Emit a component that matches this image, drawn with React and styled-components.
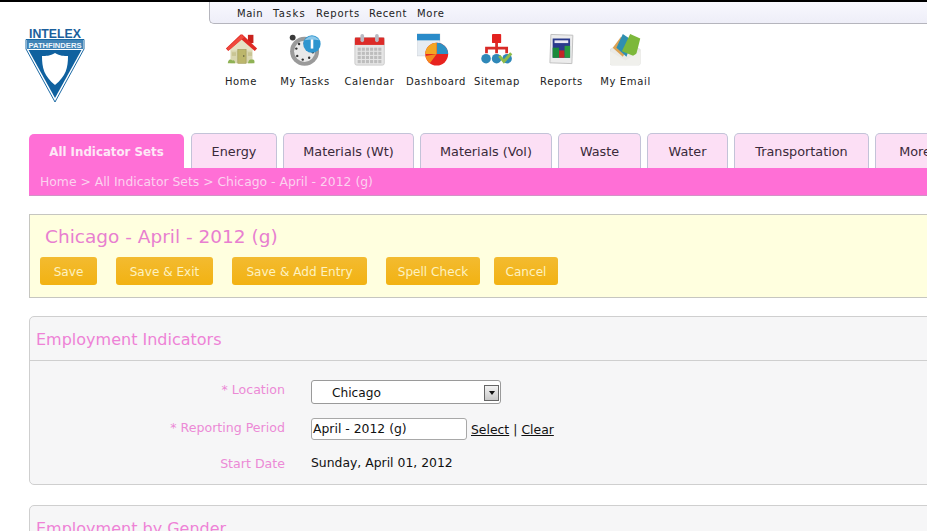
import React from 'react';
import styled, { createGlobalStyle } from 'styled-components';

const Global = createGlobalStyle`
  html, body { margin: 0; padding: 0; background: #fff; overflow: hidden; }
  body { font-family: "DejaVu Sans", Verdana, sans-serif; width: 927px; height: 531px; }
`;
const Page = styled.div`
  width: 927px; height: 531px; overflow: hidden; display: flex; flex-direction: column;
  border-top: 2px solid #000; box-sizing: border-box;
`;
const Header = styled.header`
  display: flex; height: 131px; flex: none;
`;
const LogoBox = styled.div`
  width: 209px; flex: none; padding: 26px 0 0 25px; box-sizing: border-box;
`;
const NavCol = styled.div`
  flex: 1; display: flex; flex-direction: column;
`;
const TopMenu = styled.nav`
  height: 22px; flex: none; box-sizing: border-box; background: linear-gradient(#f8f8fe, #eeeef8);
  border-left: 1px solid #b5b5bd; border-bottom: 1px solid #b5b5bd; border-bottom-left-radius: 5px;
  display: flex; gap: 10px; padding: 6px 0 0 27px; font-size: 10px; line-height: 12px; color: #222; letter-spacing: .55px;
`;
const MenuItem = styled.span`
  width: ${p => p.$w}px; flex: none; white-space: nowrap; letter-spacing: ${p => p.$ls}px;
`;
const IconRow = styled.div`
  display: flex; padding-top: 9px;
`;
const IconItem = styled.a`
  width: ${p => p.$w}px; flex: none; display: flex; flex-direction: column; align-items: center;
  font-size: 10px; color: #222; white-space: nowrap; letter-spacing: .65px;
  span { margin-top: 9px; line-height: 13px; }
  svg { display: block; height: 33px; width: auto; margin-right: ${p => p.$shift || 0}px; }
`;
const TabBar = styled.div`
  display: flex; align-items: flex-end; height: 35px; padding-left: 29px; gap: 6px; flex: none; overflow: hidden;
`;
const Tab = styled.div`
  flex: none; width: ${p => p.$w}px; height: ${p => p.$active ? 34 : 35}px; box-sizing: border-box;
  text-align: center; font-size: ${p => p.$active ? 11.8 : 12.8}px; line-height: 36px; white-space: nowrap;
  font-weight: ${p => p.$active ? 700 : 400};
  border-radius: 5px 5px 0 0;
  color: ${p => p.$active ? '#fde8f6' : '#3a2a3a'};
  background: ${p => p.$active ? '#ff6fd6' : '#fcdff5'};
  border: ${p => p.$active ? 'none' : '1px solid #c3c3d8'};
  border-bottom: none;
  margin-right: ${p => p.$active ? 1 : 0}px;
`;
const Crumbs = styled.div`
  margin-left: 29px; height: 28px; flex: none; box-sizing: border-box; background: #ff6fd6;
  border-bottom: 1px solid #d392c6; padding-left: 11px; line-height: 28px; font-size: 12.37px; color: #fbd3ef;
`;
const TitleBox = styled.section`
  margin: 18px 0 0 29px; width: 920px; height: 84px; flex: none; box-sizing: border-box;
  background: #ffffdf; border: 1px solid #c6c6c0; padding: 10px 0 0 10px;
`;
const Title = styled.h1`
  margin: 0 0 8px 5px; font-weight: 400; font-size: 18.5px; line-height: 24px; color: #e87fd0;
`;
const Buttons = styled.div` display: flex; `;
const Btn = styled.button`
  width: ${p => p.$w}px; margin-right: ${p => p.$mr}px; height: 28px; padding: 2px 0 0; border: none; border-radius: 3px;
  background: linear-gradient(#f3bb30, #f2b212);
  color: #fdf2c0; font-family: inherit; font-size: 12.1px; text-align: center;
`;
const Panel = styled.section`
  margin: ${p => p.$mt}px 0 0 29px; width: 920px; flex: none; box-sizing: border-box;
  background: #f6f6f7; border: 1px solid #cfcfcf; border-radius: 5px;
`;
const PanelHead = styled.h2`
  margin: 0; height: 44px; box-sizing: border-box; padding: 1px 0 0 6px; line-height: 44px;
  font-weight: 400; font-size: 16px; color: #ee82d6;
  border-bottom: ${p => p.$noline ? 'none' : '1px solid #cfcfcf'};
`;
const Form = styled.div`
  display: grid; grid-template-columns: 255px 1fr; column-gap: 26px; padding-top: 19px; height: 123px; box-sizing: border-box;
  grid-template-rows: 25px 24px 24px;
`;
const Label = styled.label`
  text-align: right; font-size: 12.6px; color: #ec8ad6; line-height: 18px; margin-top: ${p => p.$t || 0}px;
`;
const Select = styled.div`
  width: 190px; height: 24px; box-sizing: border-box; background: #fff; border: 1px solid #9a9a9a; border-radius: 3px;
  display: flex; align-items: center; justify-content: space-between; padding: 1px 1px 0 20px; font-size: 12.2px; color: #111;
`;
const Arrow = styled.span`
  width: 15px; height: 16px; box-sizing: border-box; border: 1px solid #666; background: linear-gradient(#f2f2f2, #c9c9c9);
  display: flex; align-items: center; justify-content: center;
  &::after { content: ''; border-left: 3.5px solid transparent; border-right: 3.5px solid transparent; border-top: 4px solid #111; }
`;
const FieldRow = styled.div`
  display: flex; align-items: center; gap: 4px; font-size: 12.4px; color: #111; margin-top: ${p => p.$t || 0}px; height: 22px;
`;
const Input = styled.div`
  width: 156px; height: 22px; box-sizing: border-box; background: #fff; border: 1px solid #a8a8a8; border-radius: 3px;
  padding-left: 1px; line-height: 20px; white-space: nowrap;
`;
const Lnk = styled.a` color: #111; text-decoration: underline; `;
const Value = styled.div` font-size: 12.4px; color: #111; line-height: 18px; margin-top: ${p => p.$t || 0}px; `;

const Logo = () => (
  <svg width="60" height="76" viewBox="0 0 60 76">
    <text x="30" y="9.6" textAnchor="middle" fontFamily="'Liberation Sans', sans-serif" fontWeight="700" fontSize="12" fill="#1b5f9c" textLength="52" lengthAdjust="spacingAndGlyphs">INTELEX</text>
    <path d="M1 11.5 H59 V21 L30 74 L1 21 Z" fill="#fff" stroke="#1b6aa5" strokeWidth="1"/>
    <path d="M3.5 22 H56.5 L30 70 Z" fill="#0f619f"/>
    <rect x="2" y="12" width="56" height="9" fill="#3f83b6"/>
    <text x="30" y="19.6" textAnchor="middle" fontFamily="'Liberation Sans', sans-serif" fontWeight="700" fontSize="8" fill="#eef5fa" textLength="53" lengthAdjust="spacingAndGlyphs">PATHFINDERS</text>
    <path d="M30 25 C35 28 39 28 43 28 C43 40 41 48 30 57 C19 48 17 40 17 28 C21 28 25 28 30 25 Z" fill="#fff"/>
  </svg>
);
const HomeIcon = () => (
  <svg viewBox="0 0 36 36">
    <rect x="6" y="16" width="24" height="17" fill="#d9d6b0"/>
    <path d="M6 16 L18 5 L30 16 V19 H6 Z" fill="#e5e2c4"/>
    <rect x="14" y="18" width="9" height="15" fill="#bcb66c" stroke="#98934f" strokeWidth=".6"/>
    <circle cx="20.5" cy="25" r=".8" fill="#443"/>
    <rect x="7.5" y="21" width="4.5" height="4" fill="#c9c594"/><rect x="25" y="21" width="4.5" height="4" fill="#c9c594"/>
    <path d="M3 33 q1-6 5-3 q3-1 3 3 Z M25 33 q1-5 4-4 q4-1 3 4 Z" fill="#8fb255"/>
    <rect x="25" y="2" width="6" height="9" fill="#c9211c"/>
    <path d="M1 17 L17 1.5 h2 L35 17 L32.5 19.5 L18 7 L3.5 19.5 Z" fill="#e02a24"/>
    <path d="M2 17 L18 2 L21 4.5 L4 19 Z" fill="#f04a3e"/>
  </svg>
);
const TasksIcon = () => (
  <svg viewBox="0 0 36 36">
    <circle cx="4" cy="5" r="3.2" fill="#3a3a3a"/>
    <circle cx="17" cy="20" r="15.8" fill="#9a9a9a"/>
    <circle cx="17" cy="20" r="11.5" fill="#e9e9e9"/>
    {[[17,11],[24,14],[26,21],[22,27],[15,29],[9,25],[8,17],[11,12]].map(([x,y],i)=><circle key={i} cx={x} cy={y} r="1.3" fill={i===0?'#c33':'#333'}/>)}
    <circle cx="25" cy="12" r="9.5" fill="#2f96cf"/>
    <path d="M17 8 a9.5 9.5 0 0 1 16 0 q-8 -2 -16 0 Z" fill="#8cc8ea"/>
    <rect x="23.7" y="7" width="2.8" height="10" fill="#fff"/>
  </svg>
);
const CalendarIcon = () => (
  <svg viewBox="0 0 34 36">
    <rect x="1" y="5" width="32" height="30" rx="2" fill="#e6e6e6" stroke="#c8c8c8"/>
    <rect x="1" y="5" width="32" height="8" fill="#dc2b28"/>
    <rect x="7" y="1" width="4" height="9" rx="2" fill="#b9b9c2"/>
    <rect x="23" y="1" width="4" height="9" rx="2" fill="#b9b9c2"/>
    {[0,1,2,3].flatMap(r=>[0,1,2,3,4,5].map(c=><rect key={r+'-'+c} x={4+c*4.5} y={16+r*4.5} width="3.4" height="3.4" fill="#bdbdbd"/>))}
  </svg>
);
const DashIcon = () => (
  <svg viewBox="0 0 34 36">
    <rect x="0" y="1" width="25" height="24" fill="#e6ecf2" stroke="#c7ccd2" strokeWidth=".6"/>
    <rect x="0" y="1" width="25" height="7" fill="#2a8bc9"/>
    <circle cx="21.5" cy="23" r="12.5" fill="#e8231f"/>
    <path d="M21.5 23 L21.5 10.5 A12.5 12.5 0 0 1 34 23 Z" fill="#2d91c4"/>
    <path d="M21.5 23 L9 23 A12.5 12.5 0 0 1 21.5 10.5 Z" fill="#f5a623"/>
    <path d="M21.5 23 L9.2 25 A12.5 12.5 0 0 0 14 33 Z" fill="#f58a1f"/>
  </svg>
);
const SitemapIcon = () => (
  <svg viewBox="0 0 34 36">
    <rect x="12" y="1" width="10" height="10" rx="1" fill="#e3211f"/>
    <path d="M15.5 11 h3 v4 h11 v7 h-3 v-4 h-8 v4 h-3 v-4 h-8 v4 h-3 v-7 h11 Z" fill="#d82a27"/>
    <circle cx="5.5" cy="28" r="5.2" fill="#2f88b8"/><circle cx="17" cy="28" r="5.2" fill="#2f88b8"/><circle cx="28.5" cy="28" r="5.2" fill="#2f88b8"/>
    <path d="M20 25 l5 6 l8-9" fill="none" stroke="#8fbb4a" strokeWidth="3.2"/>
  </svg>
);
const ReportsIcon = () => (
  <svg viewBox="0 0 28 36">
    <rect x="1.5" y="2" width="24" height="31" fill="#ececec" stroke="#bdbdbd" transform="rotate(2 14 18)"/>
    <rect x="4" y="6" width="19" height="21" fill="#2a3a8c"/>
    <path d="M4 16 h7 v11 h-7 Z" fill="#1a8a3a"/><path d="M11 19 h6 v8 h-6 Z" fill="#c42626"/><path d="M17 14 h6 v13 h-6 Z" fill="#2a9a3e"/>
    <rect x="6" y="8" width="15" height="3" fill="#e8e8f4"/>
  </svg>
);
const MailIcon = () => (
  <svg viewBox="0 0 34 36">
    <path d="M0 18 L17 8 L33 18 V33 q0 2-2 2 H2 q-2 0-2-2 Z" fill="#eaeae6" stroke="#d6d6d2" strokeWidth=".6"/>
    <path d="M3 16 L12 4 L22 12 L14 26 Z" fill="#dca253"/>
    <path d="M7 16 L14 1 L24 8 L18 26 Z" fill="#2f8fb0"/>
    <path d="M13 20 L22 1 L33 6 L28 26 Z" fill="#7cb83a"/>
    <path d="M0 20 L17 30 L33 20 V33 q0 2-2 2 H2 q-2 0-2-2 Z" fill="#f0f0ec"/>
  </svg>
);

const menu = [['Main', 26, .55], ['Tasks', 33, 1.2], ['Reports', 43, .8], ['Recent', 38, .55], ['More', 27, .7]];
const navIcons = [
  { I: HomeIcon, t: 'Home', w: 64 },
  { I: TasksIcon, t: 'My Tasks', w: 64 },
  { I: CalendarIcon, t: 'Calendar', w: 65 },
  { I: DashIcon, t: 'Dashboard', w: 68, shift: 6 },
  { I: SitemapIcon, t: 'Sitemap', w: 54 },
  { I: ReportsIcon, t: 'Reports', w: 75 },
  { I: MailIcon, t: 'My Email', w: 53 },
];
const tabs = [
  ['Energy', 86], ['Materials (Wt)', 131], ['Materials (Vol)', 132], ['Waste', 83], ['Water', 81], ['Transportation', 135], ['More', 80],
];
const buttons = [['Save', 57, 19], ['Save & Exit', 97, 19], ['Save & Add Entry', 135, 19], ['Spell Check', 94, 14], ['Cancel', 64, 0]];

export default function App() {
  return (
    <Page>
      <Global />
      <Header>
        <LogoBox><Logo /></LogoBox>
        <NavCol>
          <TopMenu>{menu.map(([m, w, ls]) => <MenuItem key={m} $w={w} $ls={ls}>{m}</MenuItem>)}</TopMenu>
          <IconRow>
            {navIcons.map(({ I, t, w, shift }) => <IconItem key={t} $w={w} $shift={shift}><I /><span>{t}</span></IconItem>)}
          </IconRow>
        </NavCol>
      </Header>
      <TabBar>
        <Tab $active $w={155}>All Indicator Sets</Tab>
        {tabs.map(([t, w]) => <Tab key={t} $w={w}>{t}</Tab>)}
      </TabBar>
      <Crumbs>Home &gt; All Indicator Sets &gt; Chicago - April - 2012 (g)</Crumbs>
      <TitleBox>
        <Title>Chicago - April - 2012 (g)</Title>
        <Buttons>{buttons.map(([t, w, mr]) => <Btn key={t} $w={w} $mr={mr}>{t}</Btn>)}</Buttons>
      </TitleBox>
      <Panel $mt={18}>
        <PanelHead>Employment Indicators</PanelHead>
        <Form>
          <Label $t={1}>* Location</Label>
          <Select>Chicago<Arrow /></Select>
          <Label $t={14}>* Reporting Period</Label>
          <FieldRow $t={13}><Input>April - 2012 (g)</Input><Lnk>Select</Lnk> | <Lnk>Clear</Lnk></FieldRow>
          <Label $t={26}>Start Date</Label>
          <Value $t={25}>Sunday, April 01, 2012</Value>
        </Form>
      </Panel>
      <Panel $mt={20}>
        <PanelHead $noline>Employment by Gender</PanelHead>
      </Panel>
    </Page>
  );
}
